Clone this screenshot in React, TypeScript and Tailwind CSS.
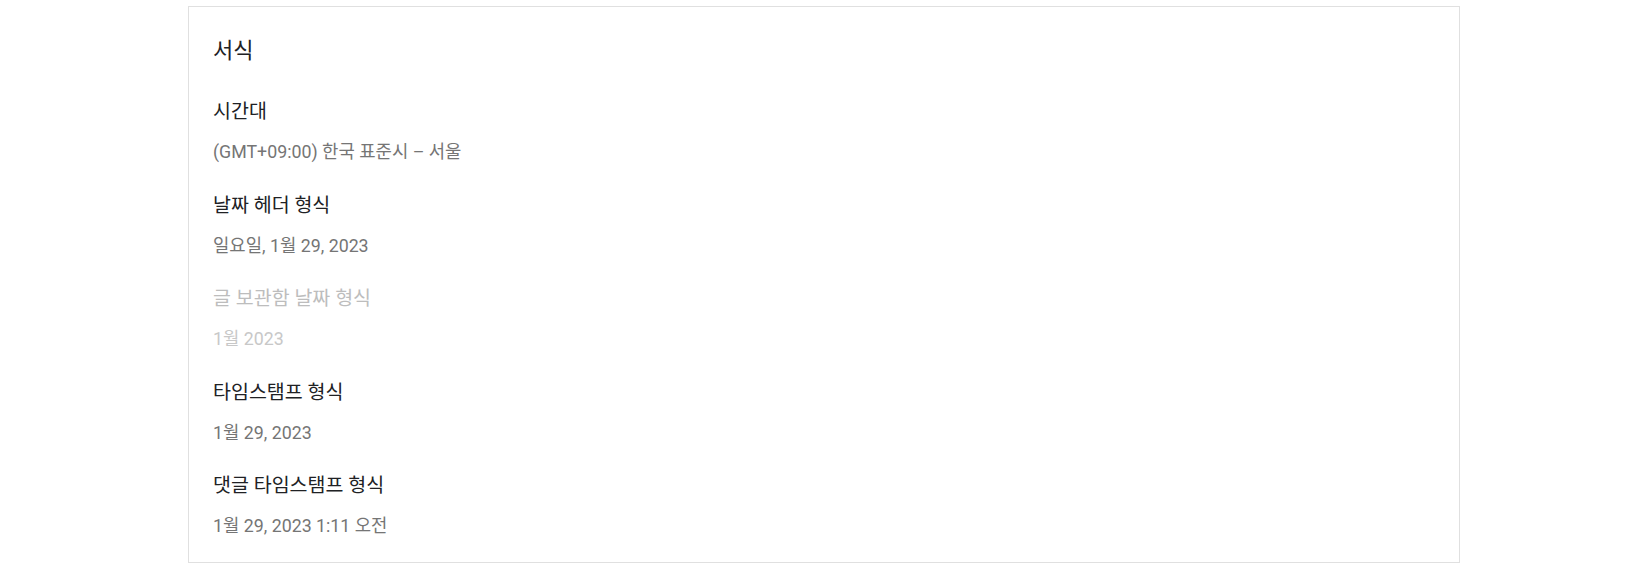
const items = [
  { label: "시간대", value: "(GMT+09:00) 한국 표준시 – 서울" },
  { label: "날짜 헤더 형식", value: "일요일, 1월 29, 2023" },
  { label: "글 보관함 날짜 형식", value: "1월 2023", disabled: true },
  { label: "타임스탬프 형식", value: "1월 29, 2023" },
  { label: "댓글 타임스탬프 형식", value: "1월 29, 2023 1:11 오전" },
];

const SettingItem = ({
  label,
  value,
  disabled,
}: {
  label: string;
  value: string;
  disabled?: boolean;
}) => (
  <div className="flex flex-col gap-[16px]">
    <div
      className={
        disabled
          ? "text-[19.5px] leading-[24px] text-[#bdbdbd]"
          : "text-[19.5px] leading-[24px] text-[#202124]"
      }
    >
      {label}
    </div>
    <div
      className={
        disabled
          ? "text-[17.8px] leading-[24px] text-[#c8c8c8]"
          : "text-[17.8px] leading-[24px] text-[#757575]"
      }
    >
      {value}
    </div>
  </div>
);

export default function App() {
  return (
    <div
      className="min-h-screen bg-white pt-[6px]"
      style={{ fontFamily: "Roboto, 'Noto Sans CJK KR', sans-serif" }}
    >
      <section className="mx-auto w-[1272px] border border-[#e0e0e0] bg-white px-[24px] pt-[30px] pb-[24px]">
        <h2 className="text-[22px] leading-[28px] text-[#202124]">서식</h2>
        <div className="mt-[35px] flex flex-col gap-[29.5px]">
          {items.map((item) => (
            <SettingItem key={item.label} {...item} />
          ))}
        </div>
      </section>
    </div>
  );
}
